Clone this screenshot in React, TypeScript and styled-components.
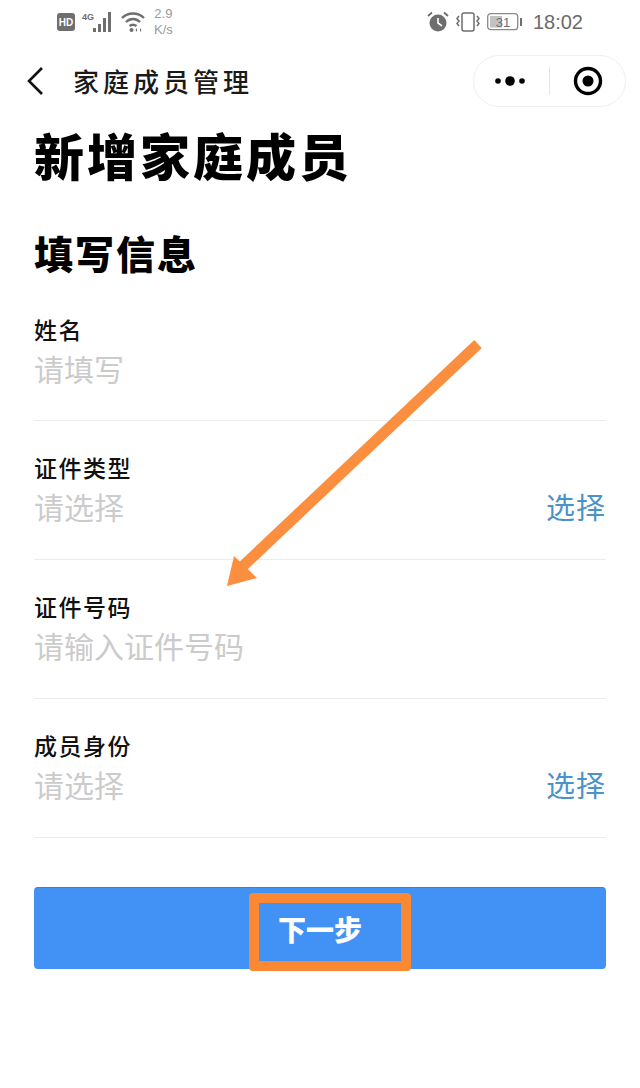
import styled, { createGlobalStyle } from 'styled-components';

const GlobalStyle = createGlobalStyle`
  html, body {
    margin: 0;
    padding: 0;
    background: #ffffff;
  }
  body {
    font-family: 'Noto Sans CJK SC', 'Liberation Sans', sans-serif;
  }
`;

const Page = styled.div`
  position: relative;
  width: 640px;
  height: 1088px;
  overflow: hidden;
  background: #ffffff;
`;

const StatusBar = styled.div`
  display: flex;
  justify-content: space-between;
  align-items: center;
  height: 44px;
  padding: 0 57px;
  box-sizing: border-box;
  color: #6e6e6e;
`;

const StatusGroup = styled.div`
  display: flex;
  align-items: center;
  gap: 7px;
`;

const Speed = styled.div`
  font-family: 'Liberation Sans', sans-serif;
  font-size: 13px;
  line-height: 16px;
  color: #9a9a9a;
  text-align: center;
  margin-left: 2px;
`;

const Clock = styled.span`
  font-family: 'Liberation Sans', sans-serif;
  font-size: 20px;
  color: #6a6a6a;
  margin-left: 3px;
`;

const NavBar = styled.div`
  display: flex;
  align-items: center;
  height: 74px;
  padding: 0 14px 0 26px;
`;

const NavTitle = styled.div`
  font-size: 26px;
  line-height: 32px;
  font-weight: 500;
  letter-spacing: 4px;
  color: #1a1a1a;
  margin-left: 29px;
  flex: 1;
`;

const Capsule = styled.div`
  display: flex;
  align-items: center;
  width: 153px;
  height: 52px;
  box-sizing: border-box;
  border: 1px solid #efefef;
  border-radius: 26px;
`;

const CapsuleSide = styled.div`
  display: flex;
  flex: 1;
  justify-content: center;
  align-items: center;
`;

const CapsuleDivider = styled.div`
  width: 1px;
  height: 28px;
  background: #e4e4e4;
`;

const Content = styled.div`
  padding: 0 34px;
`;

const PageTitle = styled.h1`
  margin: 1px 0 0;
  font-size: 50px;
  line-height: 70px;
  font-weight: 900;
  letter-spacing: 3px;
  color: #000000;
`;

const SectionTitle = styled.h2`
  margin: 37px 0 0;
  font-size: 39px;
  line-height: 52px;
  font-weight: 900;
  letter-spacing: 2px;
  color: #000000;
`;

const Field = styled.div`
  display: flex;
  flex-direction: column;
  height: 139px;
  box-sizing: border-box;
  padding-top: 31px;
  border-bottom: 1px solid #ededed;
`;

const FirstField = styled(Field)`
  height: 143px;
  padding-top: 36px;
`;

const Label = styled.div`
  font-size: 23px;
  line-height: 30px;
  font-weight: 500;
  letter-spacing: 1.5px;
  color: #111111;
`;

const FieldRow = styled.div`
  display: flex;
  justify-content: space-between;
  align-items: center;
  margin-top: 3px;
`;

const Placeholder = styled.div`
  font-size: 30px;
  line-height: 42px;
  color: #cbcbcb;
`;

const SelectLink = styled.div`
  font-size: 29px;
  line-height: 42px;
  letter-spacing: 1px;
  color: #4b92c8;
`;

const NextButton = styled.button`
  display: flex;
  justify-content: center;
  align-items: center;
  width: 100%;
  height: 82px;
  margin-top: 49px;
  border: none;
  border-top: 1px solid #3a7fd8;
  border-radius: 4px;
  background: #4291f5;
  color: #ffffff;
  font-family: inherit;
  font-size: 28px;
  font-weight: 900;
`;

const Highlight = styled.div`
  position: absolute;
  left: 249px;
  top: 893px;
  width: 162px;
  height: 78px;
  box-sizing: border-box;
  border: 10px solid #fb8933;
  border-radius: 4px;
`;

const ArrowLayer = styled.svg`
  position: absolute;
  left: 210px;
  top: 330px;
`;

const fields = [
  { label: '证件类型', placeholder: '请选择', select: true },
  { label: '证件号码', placeholder: '请输入证件号码', select: false },
  { label: '成员身份', placeholder: '请选择', select: true },
];

function App() {
  return (
    <Page>
      <GlobalStyle />
      <StatusBar>
        <StatusGroup>
          <svg width="18" height="18" viewBox="0 0 18 18">
            <rect width="18" height="18" rx="3" fill="#6e6e6e" />
            <text x="9" y="13" fontSize="10" fontWeight="700" fontFamily="Liberation Sans" textAnchor="middle" fill="#fff">HD</text>
          </svg>
          <svg width="32" height="22" viewBox="0 0 32 22">
            <text x="0" y="9" fontSize="9" fontWeight="700" fontFamily="Liberation Sans" fill="#6e6e6e">4G</text>
            <rect x="11" y="17" width="3" height="4" fill="#6e6e6e" />
            <rect x="16" y="13" width="3" height="8" fill="#6e6e6e" />
            <rect x="21" y="7" width="3" height="14" fill="#6e6e6e" />
            <rect x="26" y="1" width="3" height="20" fill="#6e6e6e" />
          </svg>
          <svg width="24" height="22" viewBox="0 0 24 22" fill="none" stroke="#6e6e6e" strokeWidth="2.4">
            <path d="M1 7 C7 1 17 1 23 7" />
            <path d="M5 11 C9 7 15 7 19 11" />
            <path d="M8.5 15 C10.5 13.5 13.5 13.5 15.5 15" />
            <circle cx="10.5" cy="19" r="2" fill="#6e6e6e" stroke="none" />
            <path d="M16 17 L14.5 19 L16 21 Z M19 17 L20.5 19 L19 21 Z" fill="#6e6e6e" stroke="none" />
          </svg>
          <Speed>
            2.9
            <br />
            K/s
          </Speed>
        </StatusGroup>
        <StatusGroup>
          <svg width="22" height="22" viewBox="0 0 22 22">
            <circle cx="11" cy="12" r="8.5" fill="#6e6e6e" />
            <path d="M11 7 V12 L15 15" stroke="#fff" strokeWidth="1.6" fill="none" />
            <path d="M1 5 L5 1.5 M21 5 L17 1.5" stroke="#6e6e6e" strokeWidth="1.8" />
          </svg>
          <svg width="24" height="22" viewBox="0 0 24 22" fill="none" stroke="#6e6e6e" strokeWidth="1.5">
            <rect x="6" y="2" width="12" height="18" rx="2" />
            <path d="M3 5 L1 7.5 L3 10 L1 12.5 L3 15 M21 5 L23 7.5 L21 10 L23 12.5 L21 15" />
          </svg>
          <svg width="36" height="20" viewBox="0 0 36 20">
            <rect x="0.7" y="1.7" width="30" height="16" rx="3" fill="#fff" stroke="#8a8a8a" strokeWidth="1.3" />
            <rect x="3" y="4" width="12" height="11.5" fill="#c2c2c2" />
            <text x="16" y="14.5" fontSize="13" fontFamily="Liberation Sans" textAnchor="middle" fill="#6e6e6e">31</text>
            <rect x="33" y="6" width="2" height="8" fill="#6e6e6e" />
          </svg>
          <Clock>18:02</Clock>
        </StatusGroup>
      </StatusBar>
      <NavBar>
        <svg width="18" height="30" viewBox="0 0 18 30" fill="none" stroke="#111" strokeWidth="2.6">
          <path d="M16 2 L3 15 L16 28" />
        </svg>
        <NavTitle>家庭成员管理</NavTitle>
        <Capsule>
          <CapsuleSide>
            <svg width="34" height="12" viewBox="0 0 34 12" fill="#000">
              <circle cx="3" cy="6" r="2.8" />
              <circle cx="15" cy="6" r="4.8" />
              <circle cx="27" cy="6" r="2.8" />
            </svg>
          </CapsuleSide>
          <CapsuleDivider />
          <CapsuleSide>
            <svg width="30" height="30" viewBox="0 0 30 30">
              <circle cx="15" cy="15" r="12.5" fill="none" stroke="#000" strokeWidth="3.4" />
              <circle cx="15" cy="15" r="5.5" fill="#000" />
            </svg>
          </CapsuleSide>
        </Capsule>
      </NavBar>
      <Content>
        <PageTitle>新增家庭成员</PageTitle>
        <SectionTitle>填写信息</SectionTitle>
        <FirstField>
          <Label>姓名</Label>
          <FieldRow>
            <Placeholder>请填写</Placeholder>
          </FieldRow>
        </FirstField>
        {fields.map((field) => (
          <Field key={field.label}>
            <Label>{field.label}</Label>
            <FieldRow>
              <Placeholder>{field.placeholder}</Placeholder>
              {field.select && <SelectLink>选择</SelectLink>}
            </FieldRow>
          </Field>
        ))}
        <NextButton>下一步</NextButton>
      </Content>
      <Highlight />
      <ArrowLayer width="290" height="270" viewBox="0 0 290 270">
        <path d="M268 14 L33 236" stroke="#fb8f3f" strokeWidth="11" fill="none" />
        <path d="M17 256 L24 226 L47 248 Z" fill="#fb8f3f" />
      </ArrowLayer>
    </Page>
  );
}

export default App;
